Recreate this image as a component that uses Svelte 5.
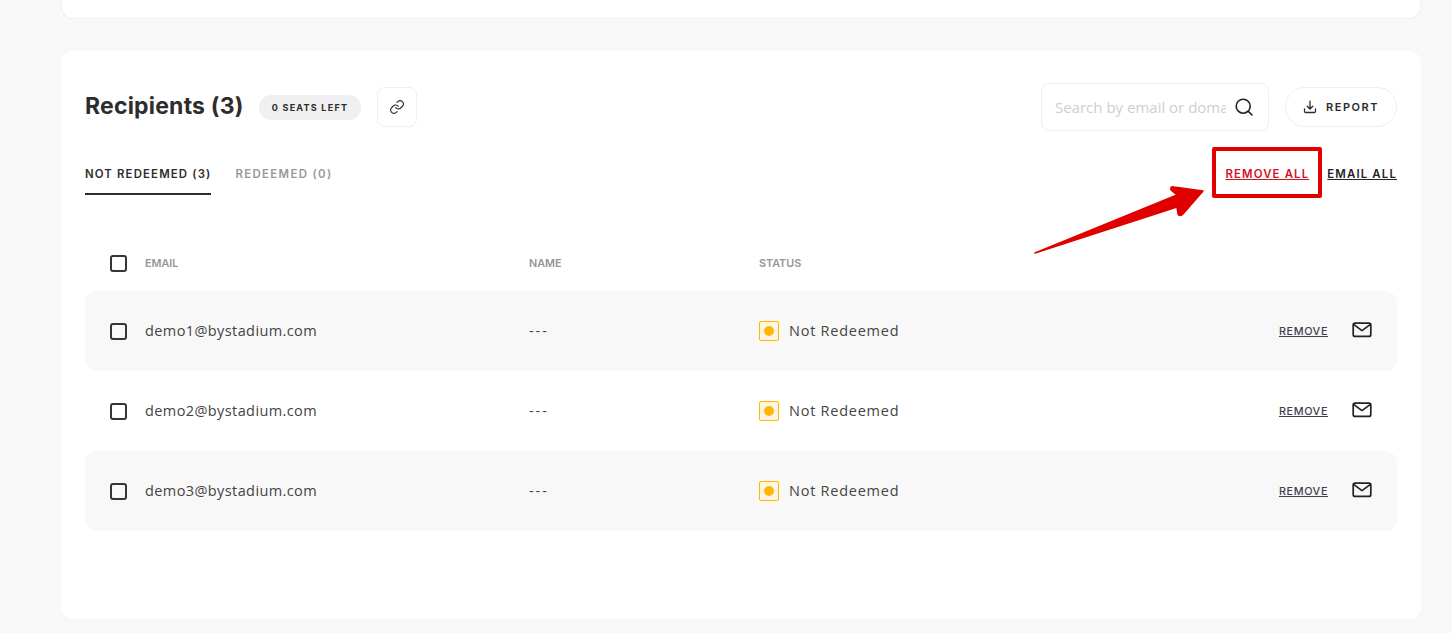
<script>
  let recipients = ['demo1@bystadium.com', 'demo2@bystadium.com', 'demo3@bystadium.com'];
</script>

<div class="page">
  <div class="top-card"></div>

  <section class="card">
    <div class="head">
      <h2>Recipients (3)</h2>
      <span class="seats">0 SEATS LEFT</span>
      <button class="link-btn" aria-label="Copy link">
        <svg width="16" height="16" viewBox="0 0 24 24" fill="none" stroke="#2d2d2d" stroke-width="1.7" stroke-linecap="round" stroke-linejoin="round">
          <path d="M10 13a5 5 0 0 0 7.5.5l3-3a5 5 0 0 0-7-7l-1.7 1.7" />
          <path d="M14 11a5 5 0 0 0-7.5-.5l-3 3a5 5 0 0 0 7 7l1.7-1.7" />
        </svg>
      </button>
      <div class="spacer"></div>
      <div class="search">
        <input placeholder="Search by email or domain" />
        <svg width="20" height="20" viewBox="0 0 20 20" fill="none" stroke="#1f2328" stroke-width="1.6" stroke-linecap="round">
          <circle cx="9.2" cy="9.2" r="7" />
          <path d="M14.4 14.4 18 18" />
        </svg>
      </div>
      <button class="report">
        <svg width="14" height="14" viewBox="0 0 14 14" fill="none" stroke="#2d2d2d" stroke-width="1.3" stroke-linecap="round" stroke-linejoin="round">
          <path d="M7 1.2v7.6M4.2 6.2 7 9l2.8-2.8" />
          <path d="M1.5 9v2.2c0 .8.5 1.3 1.3 1.3h8.4c.8 0 1.3-.5 1.3-1.3V9" />
        </svg>
        REPORT
      </button>
    </div>

    <div class="tabs-row">
      <div class="tab active">NOT REDEEMED (3)</div>
      <div class="tab">REDEEMED (0)</div>
      <div class="spacer"></div>
      <a class="bulk remove-all" href="#remove">REMOVE ALL</a>
      <a class="bulk email-all" href="#email">EMAIL ALL</a>
    </div>

    <div class="table-head row">
      <span class="check"></span>
      <span class="col-email">EMAIL</span>
      <span class="col-name">NAME</span>
      <span class="col-status">STATUS</span>
    </div>

    {#each recipients as email, i}
      <div class="row item" class:shaded={i % 2 === 0}>
        <span class="check"></span>
        <span class="col-email">{email}</span>
        <span class="col-name dashes">---</span>
        <span class="col-status status">
          <span class="dot-box"><span class="dot"></span></span>
          Not Redeemed
        </span>
        <a class="remove" href="#remove">REMOVE</a>
        <svg class="mail" width="20" height="16" viewBox="0 0 20 16" fill="none" stroke="#1f2328" stroke-width="1.7" stroke-linejoin="round" stroke-linecap="round">
          <rect x="1.2" y="1.2" width="17.6" height="13.2" rx="2" />
          <path d="M1.6 2.4 10 8.6l8.4-6.2" />
        </svg>
      </div>
    {/each}
  </section>

  <!-- screenshot annotation drawn on top of the page -->
  <div class="red-box"></div>
  <svg class="arrow" width="180" height="80" viewBox="0 0 180 80">
    <path fill="#e00000" stroke="#e00000" stroke-width="1.5" stroke-linejoin="round" d="M1 71 L143 13 L137 8 Q136 4 140 5 L169 9 L149 32 Q146 35 144 32 L143 25 Z" />
  </svg>
</div>

<style>
  :global(body) {
    margin: 0;
    background: #f8f8f8;
    font-family: "Open Sans", "Noto Sans", sans-serif;
    color: #2d2d2d;
    overflow: hidden;
  }
  .page {
    position: relative;
    height: 633px;
    padding: 0 31px 0 61px;
    box-sizing: border-box;
  }
  .top-card {
    height: 19px;
    box-sizing: border-box;
    background: #fff;
    border: 1px solid #efefef;
    border-top: none;
    border-radius: 0 0 12px 12px;
    margin-bottom: 32px;
  }
  .card {
    background: #fff;
    border-radius: 12px;
    height: 568px;
    box-sizing: border-box;
    padding: 32px 24px 0;
  }
  .head {
    display: flex;
    align-items: center;
    height: 48px;
  }
  h2 {
    margin: -2px 16px 0 0;
    width: 158px;
    font-family: Inter, sans-serif;
    font-size: 23px;
    font-weight: 700;
    letter-spacing: 0.2px;
    color: #2d2d2d;
    white-space: nowrap;
  }
  .seats {
    background: #f0f0f2;
    border-radius: 13px;
    height: 25px;
    width: 102px;
    display: flex;
    align-items: center;
    justify-content: center;
    font-family: Inter, sans-serif;
    font-size: 9px;
    font-weight: 700;
    letter-spacing: 1.25px;
    margin-right: 16px;
    white-space: nowrap;
  }
  .link-btn {
    width: 40px;
    height: 40px;
    padding: 0;
    background: #fff;
    border: 1px solid #efefef;
    border-radius: 8px;
    display: flex;
    align-items: center;
    justify-content: center;
  }
  .spacer {
    flex: 1;
  }
  .search {
    width: 228px;
    height: 48px;
    box-sizing: border-box;
    border: 1px solid #efefef;
    border-radius: 8px;
    padding: 0 14px 0 13px;
    display: flex;
    align-items: center;
    gap: 8px;
    margin-right: 16px;
  }
  input {
    flex: 1;
    min-width: 0;
    border: none;
    outline: none;
    padding: 0;
    background: none;
    font-family: "Open Sans", sans-serif;
    font-size: 15px;
  }
  input::placeholder {
    color: #cfcfcf;
    opacity: 1;
  }
  .report {
    width: 112px;
    height: 40px;
    background: #fff;
    border: 1px solid #efefef;
    border-radius: 20px;
    padding: 0;
    display: flex;
    align-items: center;
    justify-content: center;
    gap: 9px;
    font-family: Inter, sans-serif;
    font-size: 11px;
    font-weight: 600;
    letter-spacing: 1.5px;
    color: #2d2d2d;
  }
  .tabs-row {
    display: flex;
    align-items: flex-start;
    margin-top: 19px;
    height: 45px;
  }
  .tab {
    height: 45px;
    box-sizing: border-box;
    padding-top: 17px;
    margin-right: 24px;
    font-family: Inter, sans-serif;
    font-size: 11.4px;
    line-height: 14px;
    font-weight: 600;
    letter-spacing: 1.15px;
    color: #989898;
  }
  .tab:not(.active) {
    letter-spacing: 1.35px;
  }
  .tab.active {
    color: #2d2d2d;
    border-bottom: 2px solid #2d2d2d;
  }
  .bulk {
    margin-top: 17px;
    font-family: Inter, sans-serif;
    font-size: 11.4px;
    line-height: 14px;
    font-weight: 600;
    letter-spacing: 1.15px;
    text-decoration: underline;
  }
  .remove-all {
    color: #d4121f;
    margin-right: 18px;
  }
  .email-all {
    color: #1f2328;
  }
  .row {
    display: flex;
    align-items: center;
    height: 80px;
    padding: 0 25px;
    border-radius: 12px;
  }
  .table-head {
    height: 56px;
    margin-top: 40px;
    border-radius: 0;
    font-family: Inter, sans-serif;
    font-size: 10.8px;
    font-weight: 600;
    color: #959595;
  }
  .item {
    font-size: 14.5px;
    letter-spacing: 0.4px;
    color: #444;
    line-height: 18px;
  }
  .item .col-email,
  .item .status {
    padding-bottom: 1px;
  }
  .shaded {
    background: #f8f8f8;
  }
  .check {
    width: 17px;
    height: 17px;
    box-sizing: border-box;
    border: 2px solid #33353a;
    border-radius: 3px;
    flex: none;
    margin-right: 18px;
  }
  .col-email {
    width: 384px;
    flex: none;
  }
  .col-name {
    width: 230px;
    flex: none;
  }
  .dashes {
    letter-spacing: 1.9px;
  }
  .col-status {
    flex: 1;
  }
  .status {
    display: flex;
    align-items: center;
    gap: 10px;
    letter-spacing: 0.75px;
  }
  .dot-box {
    width: 20px;
    height: 20px;
    box-sizing: border-box;
    border: 1px solid #ffb800;
    border-radius: 2px;
    background: #fdf5e2;
    display: flex;
    align-items: center;
    justify-content: center;
  }
  .dot {
    width: 10px;
    height: 10px;
    border-radius: 50%;
    background: #ffb800;
  }
  .remove {
    font-family: Inter, sans-serif;
    font-size: 10.8px;
    font-weight: 500;
    letter-spacing: 0.6px;
    color: #3d4150;
    text-decoration: underline;
    margin-right: 24px;
    margin-top: 2px;
  }
  .mail {
    flex: none;
    margin-top: -3px;
  }
  .red-box {
    position: absolute;
    left: 1212px;
    top: 147px;
    width: 110px;
    height: 51px;
    box-sizing: border-box;
    border: 4px solid #e00000;
    border-radius: 2px;
  }
  .arrow {
    position: absolute;
    left: 1034px;
    top: 182px;
  }
</style>
